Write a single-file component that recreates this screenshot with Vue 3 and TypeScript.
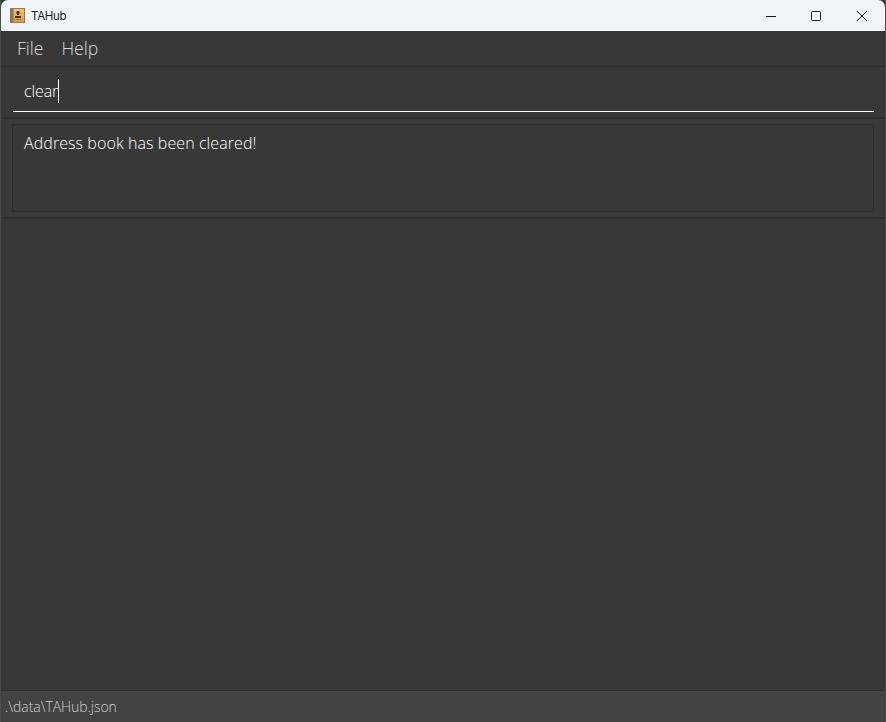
<template>
  <div class="window">
    <header class="titlebar">
      <svg class="app-icon" width="15" height="15" viewBox="0 0 15 15">
        <defs>
          <linearGradient id="cover" x1="0" y1="0" x2="0" y2="1">
            <stop offset="0" stop-color="#f0c27a" />
            <stop offset="1" stop-color="#d99a4a" />
          </linearGradient>
        </defs>
        <rect x="0.5" y="0.5" width="14" height="14" fill="url(#cover)" stroke="#9a7a4c" />
        <rect x="1" y="1" width="2.5" height="13" fill="#85775f" />
        <path d="M7 3.5h2v3.5h-2z" fill="#4a3416" />
        <circle cx="8" cy="4.8" r="1.7" fill="#4a3416" />
        <rect x="5" y="8" width="6" height="2" fill="#4a3416" />
        <rect x="5" y="11" width="6" height="1" fill="#a8762f" />
      </svg>
      <span class="app-title">TAHub</span>
      <div class="controls">
        <button class="control">
          <svg width="12" height="12" viewBox="0 0 12 12"><path d="M2 6.5h10" stroke="#1a1a1a" fill="none" /></svg>
        </button>
        <button class="control">
          <svg width="12" height="12" viewBox="0 0 12 12">
            <rect x="1.5" y="1.5" width="9" height="9" rx="1" stroke="#1a1a1a" fill="none" />
          </svg>
        </button>
        <button class="control">
          <svg width="12" height="12" viewBox="0 0 12 12">
            <path d="M1 1l10 10M11 1L1 11" stroke="#1a1a1a" fill="none" />
          </svg>
        </button>
      </div>
    </header>

    <nav class="menubar">
      <span v-for="item in menuItems" :key="item" class="menu-item">{{ item }}</span>
    </nav>

    <section class="command-box">
      <div class="command-field">
        <span class="command-text">{{ command }}</span>
        <span class="caret"></span>
      </div>
    </section>

    <section class="result-box">
      <div class="result-field">{{ result }}</div>
    </section>

    <main class="list-area"></main>

    <footer class="statusbar">{{ savePath }}</footer>
  </div>
</template>

<script setup lang="ts">
const menuItems: string[] = ['File', 'Help']
const command = 'clear'
const result = 'Address book has been cleared!'
const savePath = '.\\data\\TAHub.json'
</script>

<style>
html,
body {
  margin: 0;
  background: #3a3a3a;
}
</style>

<style scoped>
.window {
  box-sizing: border-box;
  width: 886px;
  height: 722px;
  display: flex;
  flex-direction: column;
  overflow: hidden;
  background: #383838;
  border-left: 1px solid #4a4a4a;
  border-right: 1px solid #4a4a4a;
  font-family: 'Open Sans', 'Noto Sans', sans-serif;
  font-weight: 300;
  color: #ffffff;
}

.titlebar {
  height: 31px;
  flex: none;
  display: flex;
  align-items: center;
  padding-left: 9px;
  background: #eff4f9;
  border-radius: 7px 7px 0 0;
}

.app-icon {
  flex: none;
}

.app-title {
  margin-left: 6px;
  font-family: 'Inter', 'Liberation Sans', sans-serif;
  font-size: 11.5px;
  font-weight: 400;
  letter-spacing: -0.3px;
  color: #1a1a1a;
}

.controls {
  margin-left: auto;
  display: flex;
}

.control {
  width: 46px;
  height: 30px;
  padding: 0;
  display: flex;
  align-items: center;
  justify-content: center;
  border: 0;
  background: transparent;
}

.menubar {
  height: 36px;
  flex: none;
  box-sizing: border-box;
  display: flex;
  align-items: center;
  gap: 18px;
  padding: 0 0 2px 16px;
  font-size: 17.6px;
  color: #d8d8d8;
  border-bottom: 1px solid #2f2f2f;
}

.command-box {
  height: 52px;
  flex: none;
  box-sizing: border-box;
  padding: 0 11px 5px 12px;
  border-bottom: 2px solid #2f2f2f;
  display: flex;
}

.command-field {
  flex: 1;
  display: flex;
  align-items: center;
  padding: 4px 0 0 11px;
  border-bottom: 1px solid #ffffff;
  font-size: 16px;
  letter-spacing: -0.1px;
}

.caret {
  width: 1px;
  height: 24px;
  background: #ffffff;
}

.result-box {
  height: 100px;
  flex: none;
  box-sizing: border-box;
  padding: 5px 11px;
  border-bottom: 2px solid #2f2f2f;
  display: flex;
}

.result-field {
  flex: 1;
  box-sizing: border-box;
  padding: 7px 11px;
  border: 1px solid #2d2d2d;
  font-size: 16px;
  line-height: 22px;
  letter-spacing: 0.08px;
}

.list-area {
  flex: 1;
}

.statusbar {
  height: 32px;
  flex: none;
  box-sizing: border-box;
  padding: 0 4px;
  display: flex;
  align-items: center;
  background: #434343;
  border-top: 1px solid #2f2f2f;
  font-size: 14px;
  letter-spacing: -0.05px;
  color: #d0d0d0;
}
</style>
